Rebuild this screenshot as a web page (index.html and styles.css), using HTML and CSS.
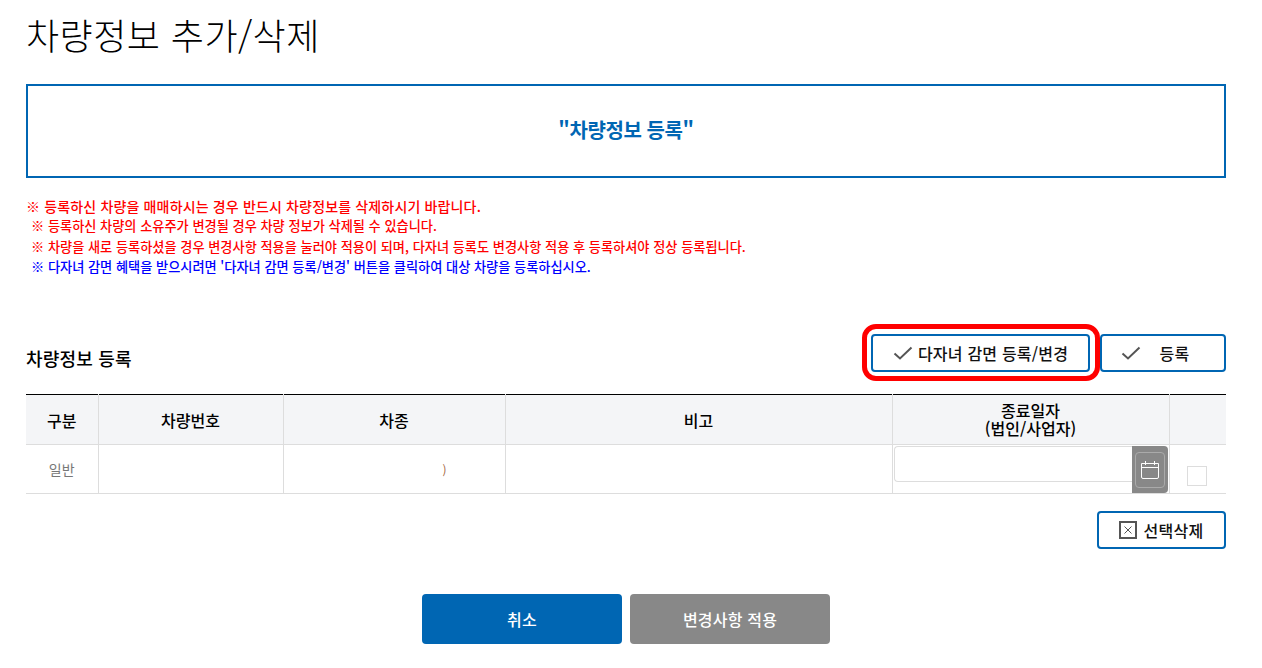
FILE: index.html
```html
<!DOCTYPE html>
<html lang="ko">
<head>
  <meta charset="UTF-8" />
  <meta name="viewport" content="width=device-width, initial-scale=1.0"/>
  <title>차량정보 추가/삭제</title>
  <link rel="stylesheet" href="styles.css">
</head>
<body>
  <div class="container">
    <h1>차량정보 추가/삭제</h1>

    <div class="info-box">"차량정보 등록"</div>

    <ul class="notes">
      <li class="first">※ 등록하신 차량을 매매하시는 경우 반드시 차량정보를 삭제하시기 바랍니다.</li>
      <li>※ 등록하신 차량의 소유주가 변경될 경우 차량 정보가 삭제될 수 있습니다.</li>
      <li>※ 차량을 새로 등록하셨을 경우 변경사항 적용을 눌러야 적용이 되며, 다자녀 등록도 변경사항 적용 후 등록하셔야 정상 등록됩니다.</li>
      <li class="blue">※ 다자녀 감면 혜택을 받으시려면 '다자녀 감면 등록/변경' 버튼을 클릭하여 대상 차량을 등록하십시오.</li>
    </ul>

    <div class="section-head">
      <h2>차량정보 등록</h2>
      <div class="actions">
        <button class="btn btn-child">
          <svg class="check" viewBox="0 0 20 14"><path d="M1.5 7.5 L7 12.5 L18.5 1.5" /></svg>
          다자녀 감면 등록/변경
        </button>
        <button class="btn btn-add">
          <svg class="check" viewBox="0 0 20 14"><path d="M1.5 7.5 L7 12.5 L18.5 1.5" /></svg>
          <span>등록</span>
        </button>
      </div>
    </div>

    <table class="car-table">
      <colgroup>
        <col class="c1"><col class="c2"><col class="c3"><col class="c4"><col class="c5"><col class="c6">
      </colgroup>
      <thead>
        <tr>
          <th>구분</th>
          <th>차량번호</th>
          <th>차종</th>
          <th>비고</th>
          <th class="th-date">종료일자<br>(법인/사업자)</th>
          <th></th>
        </tr>
      </thead>
      <tbody>
        <tr>
          <td>일반</td>
          <td></td>
          <td class="car-type"><span>)</span></td>
          <td></td>
          <td class="date-cell">
            <div class="date-field">
              <input type="text" class="date-input">
              <button class="date-btn">
                <span class="date-inner">
                  <svg viewBox="0 0 20 20" width="20" height="20"><path d="M1.5 3.5 H18.5 V17 Q18.5 18.5 17 18.5 H3 Q1.5 18.5 1.5 17 Z M1.5 7.5 H18.5 M5.5 1 V5 M14.5 1 V5" /></svg>
                </span>
              </button>
            </div>
          </td>
          <td class="check-cell"><span class="checkbox"></span></td>
        </tr>
      </tbody>
    </table>

    <div class="row-actions">
      <button class="btn btn-del">
        <svg class="x-icon" viewBox="0 0 18 18"><path class="x-box" d="M1 1 H17 V17 H1 Z" /><path d="M5.5 5.5 L12.5 12.5 M12.5 5.5 L5.5 12.5" /></svg>
        선택삭제
      </button>
    </div>

    <div class="bottom-actions">
      <button class="big-btn primary">취소</button>
      <button class="big-btn gray">변경사항 적용</button>
    </div>
  </div>
</body>
</html>
```

FILE: styles.css
```css
*, *::after {
  box-sizing: border-box;
}

body {
  margin: 0;
  background: #fff;
  color: #000;
  font-family: 'Noto Sans CJK KR', 'Noto Sans', sans-serif;
  overflow: hidden;
}

.container {
  width: 1200px;
  margin-left: 26px;
}

h1 {
  margin: 0;
  padding-top: 8px;
  height: 84px;
  font-size: 36px;
  line-height: 52px;
  font-weight: 300;
  letter-spacing: 0.45px;
}

.info-box {
  height: 94px;
  padding-bottom: 3px;
  border: 2px solid #0066b3;
  color: #0066b3;
  font-size: 20px;
  font-weight: 700;
  display: flex;
  justify-content: center;
  align-items: center;
  letter-spacing: -0.4px;
}

.notes {
  list-style: none;
  margin: 18px 0 0;
  padding: 0;
  height: 130px;
  color: #f00;
  font-size: 13.2px;
  line-height: 20.3px;
  font-weight: 500;
}

.notes li {
  padding-left: 5px;
}

.notes li.first {
  padding-left: 0;
  font-size: 14px;
  letter-spacing: 0.15px;
}

.notes li.blue {
  color: #00f;
}

.section-head {
  display: flex;
  justify-content: space-between;
  align-items: flex-end;
  height: 68px;
}

h2 {
  margin: 0 0 23px;
  font-size: 18px;
  line-height: 26px;
  font-weight: 500;
  letter-spacing: 0.2px;
}

.actions {
  display: flex;
  gap: 10px;
  padding-bottom: 22px;
}

.btn {
  height: 38px;
  background: #fff;
  border: 2px solid #0066b3;
  border-radius: 4px;
  color: #111;
  font-family: inherit;
  font-size: 16px;
  font-weight: 500;
  letter-spacing: 0.2px;
  display: flex;
  align-items: center;
  justify-content: center;
  padding: 0;
}

.check {
  width: 20px;
  height: 14px;
  fill: none;
  stroke: #555;
  stroke-width: 2;
}

.btn-child {
  width: 219px;
  gap: 5px;
  position: relative;
}

/* red annotation around the button */
.btn-child::after {
  content: "";
  position: absolute;
  left: -11px;
  top: -12px;
  width: 238px;
  height: 57px;
  border: 5px solid #f00;
  border-radius: 14px;
}

.btn-add {
  width: 126px;
  gap: 19px;
  padding-right: 16px;
}

.car-table {
  width: 1200px;
  table-layout: fixed;
  border-collapse: collapse;
  border-top: 1px solid #000;
}

.c1 { width: 72px; }
.c2 { width: 185px; }
.c3 { width: 222px; }
.c4 { width: 387px; }
.c5 { width: 277px; }
.c6 { width: 57px; }

.car-table th {
  height: 50px;
  padding: 0;
  background: #f4f5f7;
  border-right: 1px solid #ddd;
  border-bottom: 1px solid #ddd;
  font-size: 16px;
  font-weight: 500;
  line-height: 18px;
}

.car-table .th-date {
  padding-bottom: 2px;
}

.car-table td {
  height: 49px;
  padding: 0;
  border-right: 1px solid #ddd;
  border-bottom: 1px solid #ddd;
  font-size: 14px;
  color: #777;
  text-align: center;
}

.car-table th:last-child,
.car-table td:last-child {
  border-right: 0;
}

.car-type span {
  display: block;
  text-align: left;
  padding-left: 159px;
  color: #a5673f;
  font-size: 12px;
}

.date-cell {
  vertical-align: top;
}

.date-field {
  display: flex;
  height: 48px;
  padding-left: 1px;
}

.date-input {
  width: 238px;
  height: 36px;
  margin-top: 1px;
  border: 1px solid #ddd;
  border-right: 0;
  border-radius: 4px 0 0 4px;
  outline: 0;
}

.date-btn {
  width: 36px;
  height: 47px;
  padding: 0;
  margin-top: 1px;
  background: #888;
  border: 0;
  border-radius: 0 4px 4px 0;
  display: flex;
  align-items: center;
  justify-content: center;
}

.date-inner {
  width: 30px;
  height: 36px;
  border: 1px solid #aaa;
  border-radius: 4px;
  display: flex;
  align-items: center;
  justify-content: center;
}

.date-inner svg {
  fill: none;
  stroke: #fff;
  stroke-width: 1;
}

.check-cell {
  vertical-align: bottom;
}

.checkbox {
  display: block;
  width: 20px;
  height: 20px;
  margin: 0 0 7px 17px;
  border: 1px solid #ddd;
  background: #fff;
}

.row-actions {
  display: flex;
  justify-content: flex-end;
  margin-top: 17px;
}

.btn-del {
  width: 129px;
  gap: 6px;
  letter-spacing: 0.3px;
}

.x-icon {
  width: 18px;
  height: 18px;
  fill: none;
  stroke: #555;
  stroke-width: 1;
}

.x-icon .x-box {
  stroke-width: 2;
}

.bottom-actions {
  display: flex;
  justify-content: center;
  gap: 8px;
  margin-top: 45px;
}

.big-btn {
  width: 200px;
  height: 50px;
  border: 0;
  border-radius: 4px;
  color: #fff;
  font-family: inherit;
  font-size: 16px;
  font-weight: 500;
  letter-spacing: 0.2px;
}

.primary {
  background: #0066b3;
}

.gray {
  background: #888;
}
```
